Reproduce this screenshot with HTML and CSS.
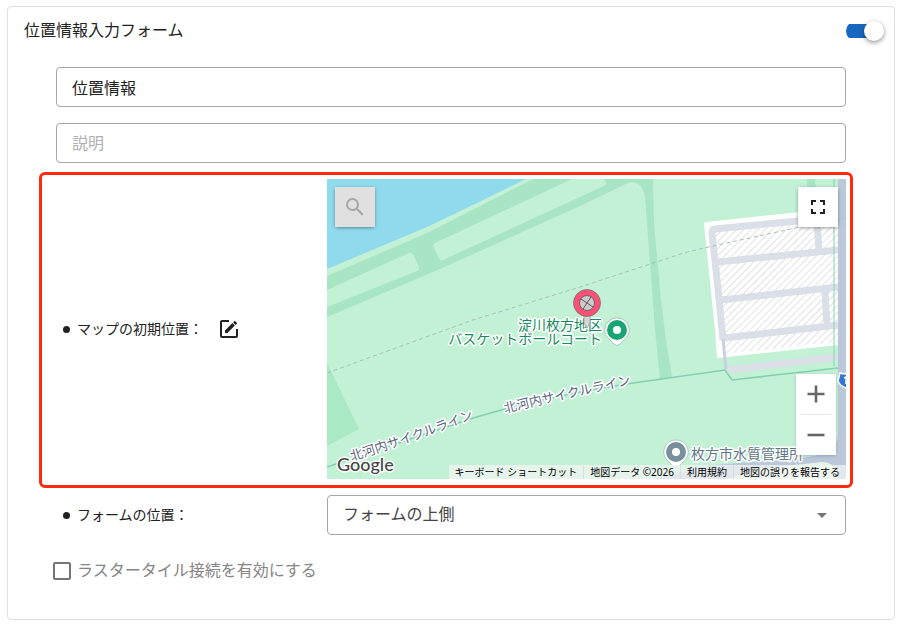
FILE: index.html
```html
<!DOCTYPE html>
<html lang="ja">
<head>
<meta charset="utf-8">
<meta name="viewport" content="width=device-width, initial-scale=1">
<title>位置情報入力フォーム</title>
<link rel="stylesheet" href="styles.css">
</head>
<body>
<form class="card">
  <header class="card-head">
    <label class="card-title" for="enabled">位置情報入力フォーム</label>
    <input class="switch" type="checkbox" role="switch" id="enabled" checked>
  </header>
  <div class="fields">
    <input class="field" type="text" aria-label="タイトル" value="位置情報">
    <input class="field" type="text" aria-label="説明" placeholder="説明">

    <div class="row highlight">
      <div class="row-label">
        <span class="bullet"></span>
        <span>マップの初期位置：</span>
        <button class="edit" type="button" aria-label="編集">
          <svg viewBox="0 0 24 24" width="24" height="24"><path d="M5,3C3.89,3 3,3.89 3,5V19A2,2 0 0,0 5,21H19A2,2 0 0,0 21,19V12H19V19H5V5H12V3H5M17.78,4C17.61,4 17.43,4.07 17.3,4.2L16.08,5.41L18.58,7.91L19.8,6.7C20.06,6.44 20.06,6 19.8,5.75L18.25,4.2C18.12,4.07 17.95,4 17.78,4M15.37,6.12L8,13.5V16H10.5L17.87,8.62L15.37,6.12Z"/></svg>
        </button>
      </div>
      <div class="map">
        <svg class="map-art" viewBox="0 0 519 300" preserveAspectRatio="xMidYMid slice">
          <defs>
            <pattern id="hatch" width="5" height="5" patternUnits="userSpaceOnUse" patternTransform="rotate(45)">
              <rect width="5" height="5" fill="#fff"/>
              <rect width="1" height="5" fill="#e2e2e4"/>
            </pattern>
            <path id="line-a" d="M25 282Q87 263 155 236"/>
            <path id="line-b" d="M178 234Q245 218 315 203"/>
          </defs>
          <rect width="519" height="300" fill="#c3f1d5"/>
          <path fill="#90daee" d="M0 0H199L150 24L100 48L0 90Z"/>
          <path fill="#a8e5c5" d="M0 97L100 54L206 0H326L327 45L334 121Q338 160 345 198L333 200L328 151L323 84L318 18Q315 2 303 3L253 27L113 90L0 138Z"/>
          <path fill="#c3f1d5" d="M0 111L82 74Q85 73 86 75L92 88Q92 91 90 92L0 128ZM108 64L245 0H277L279 4Q279 6 277 7L253 18L116 81Q113 82 112 79L106 67Q106 65 108 64Z"/>
          <path fill="#a9e9c3" d="M0 184L32 250L0 267Z"/>
          <path fill="#a8e5c5" d="M480 0H488L489 10H480Z"/>
          <path fill="#fff" d="M377 45Q377 43 379 43L511 29V166L390 179L388 151Z"/>
          <path fill="url(#hatch)" d="M388 52L511 40V163L398 175Z"/>
          <g fill="none" stroke="#dadfe8" stroke-width="7">
            <path d="M511 38L388 50Q385 50 385 54L390 100L396 161"/>
            <path d="M390 83L511 71M394 121L511 108M397 159L511 146M490 42L492 72M498 111L500 148M400 191L511 178"/>
          </g>
          <path d="M396 160L399 190" fill="none" stroke="#c9d0e1" stroke-width="3"/>
          <path d="M507 0V187" stroke="#86d4b5" stroke-width="1"/>
          <path fill="#bac8d9" d="M511 0H519V300H330L376 287L470 279Q511 277 511 256Z"/>
          <path fill="#e0f6e8" d="M400 300L430 290L495 283Q505 283 510 292V300Z"/>
          <path fill="none" stroke="#82cfb3" stroke-width="1.5" d="M0 288Q80 261 146 239L178 230Q240 214 306 204L398 191L405 201L511 189"/>
          <path fill="none" stroke="#a9bfb8" stroke-width="1" stroke-dasharray="4 3" d="M0 194L146 141L253 108L360 73L386 67L473 48L519 39"/>
          <g class="map-text path-text">
            <text><textPath href="#line-a">北河内サイクルライン</textPath></text>
            <text><textPath href="#line-b">北河内サイクルライン</textPath></text>
          </g>
          <g class="map-text place-text">
            <text x="275" y="151" text-anchor="end">淀川枚方地区</text>
            <text x="275" y="165" text-anchor="end">バスケットボールコート</text>
          </g>
          <text class="map-text works-text" x="364" y="280">枚方市水質管理所</text>
          <path fill="#fff" stroke="#8fa59b" stroke-width=".6" d="M290 139A12 12 0 0 1 299 159L293 165Q290 168 287 165L281 159A12 12 0 0 1 290 139Z"/>
          <circle cx="290" cy="151" r="10" fill="#17a673"/>
          <circle cx="290" cy="151" r="4" fill="#fff"/>
          <path fill="#fff" stroke="#9aabb0" stroke-width=".6" d="M349 261A12 12 0 0 1 358 281L352 287Q349 290 346 287L340 281A12 12 0 0 1 349 261Z"/>
          <circle cx="349" cy="273" r="10" fill="#78909c"/>
          <circle cx="349" cy="273" r="4" fill="#fff"/>
          <path d="M257 135H263V144L260 149L257 144Z" fill="#d6d6d6" stroke="#999" stroke-width=".7"/>
          <circle cx="260" cy="124" r="13.5" fill="#fa5276" stroke="#7d6d70" stroke-width=".8"/>
          <circle cx="260" cy="124" r="7.5" fill="#cfcaca" stroke="#6d6266" stroke-width="1"/>
          <path d="M254 120L266 128M264 118L256 130" stroke="#5e5558" stroke-width="1"/>
          <path d="M513 194Q519 196 525 194L527 202Q525 207 519 209Q513 207 511 202Z" fill="#3476d2" stroke="#fff" stroke-width="1.5"/>
          <path d="M517 199L519 198V205" fill="none" stroke="#fff" stroke-width="1.5"/>
          <text class="google" x="10" y="292">Google</text>
        </svg>
        <button class="map-btn search" type="button" aria-label="検索" disabled>
          <svg viewBox="0 0 24 24" width="24" height="24"><path d="M9.5,3A6.5,6.5 0 0,1 16,9.5C16,11.11 15.41,12.59 14.44,13.73L14.71,14H15.5L20.5,19L19,20.5L14,15.5V14.71L13.73,14.44C12.59,15.41 11.11,16 9.5,16A6.5,6.5 0 0,1 3,9.5A6.5,6.5 0 0,1 9.5,3M9.5,5C7,5 5,7 5,9.5C5,12 7,14 9.5,14C12,14 14,12 14,9.5C14,7 12,5 9.5,5Z"/></svg>
        </button>
        <button class="map-btn full" type="button" aria-label="全画面">
          <svg viewBox="0 0 18 18" width="18" height="18"><path d="M2 2H7V4H4V7H2ZM11 2H16V7H14V4H11ZM2 11H4V14H7V16H2ZM14 11H16V16H11V14H14Z"/></svg>
        </button>
        <div class="zoom">
          <button type="button" aria-label="ズームイン"><svg viewBox="0 0 18 18" width="18" height="18"><path d="M7.7 .5H10.3V7.7H17.5V10.3H10.3V17.5H7.7V10.3H.5V7.7H7.7Z"/></svg></button>
          <button type="button" aria-label="ズームアウト"><svg viewBox="0 0 18 18" width="18" height="18"><path d="M.5 7.7H17.5V10.3H.5Z"/></svg></button>
        </div>
        <div class="credits">
          <button type="button">キーボード ショートカット</button>
          <span>地図データ ©2026</span>
          <a href="#">利用規約</a>
          <a href="#">地図の誤りを報告する</a>
        </div>
      </div>
    </div>

    <div class="row">
      <label class="row-label" for="position">
        <span class="bullet"></span>
        <span>フォームの位置：</span>
      </label>
      <div class="select">
        <select class="field" id="position"><option>フォームの上側</option></select>
      </div>
    </div>

    <label class="check"><input type="checkbox">ラスタータイル接続を有効にする</label>
  </div>
</form>
</body>
</html>
```
FILE: styles.css
```css
* {
  box-sizing: border-box;
}

body {
  margin: 0;
  padding: 6px 4px 4px 7px;
  background: #fff;
  color: #212121;
  font: 16px/24px Roboto, "Noto Sans CJK JP", sans-serif;
}

button,
input,
select {
  margin: 0;
  font: inherit;
  color: inherit;
}

button {
  padding: 0;
  border: 0;
  background: none;
}

svg {
  display: block;
  fill: currentColor;
}

.card {
  border: 1px solid #e0e0e0;
  border-radius: 4px;
  padding: 0 16px 36px;
}

.card-head {
  display: flex;
  align-items: center;
  justify-content: space-between;
  height: 48px;
  margin-right: -6px;
}

.switch {
  appearance: none;
  position: relative;
  width: 38px;
  height: 20px;
  background: linear-gradient(#1867c0, #1867c0) 0 3px / 28px 14px no-repeat;
  border-radius: 10px;
}

.switch::after {
  content: "";
  position: absolute;
  top: 0;
  right: 0;
  width: 20px;
  height: 20px;
  border-radius: 50%;
  background: #fff;
  box-shadow: 0 2px 4px rgba(0, 0, 0, .3), 0 1px 6px rgba(0, 0, 0, .15);
}

.fields {
  display: flex;
  flex-direction: column;
  gap: 16px;
  padding: 12px 32px 0;
}

.field {
  width: 100%;
  height: 40px;
  padding: 0 15px;
  border: 1px solid #a6a6a6;
  border-radius: 4px;
  background: #fff;
  outline: 0;
}

.field::placeholder {
  color: #b0b0b0;
  opacity: 1;
}

.row {
  position: relative;
  display: grid;
  grid-template-columns: 271px 1fr;
  align-items: center;
}

.highlight::after {
  content: "";
  position: absolute;
  inset: -7px -7px -9px -17px;
  border: 3px solid #ff2a0c;
  border-radius: 6px;
  pointer-events: none;
}

.row-label {
  display: flex;
  align-items: center;
  padding-left: 7px;
  font-size: 14px;
}

.bullet {
  width: 7px;
  height: 7px;
  margin-right: 7px;
  border-radius: 50%;
  background: #212121;
}

.edit {
  margin-left: 14px;
}

.map {
  position: relative;
  height: 300px;
  overflow: hidden;
}

.map-art {
  width: 100%;
  height: 100%;
}

.map-text {
  font-size: 14px;
  stroke: #fff;
  stroke-width: 3px;
  stroke-linejoin: round;
  paint-order: stroke;
}

.path-text {
  font-size: 13px;
  fill: #5b6680;
}

.place-text {
  fill: #188a60;
}

.works-text {
  fill: #5f7886;
}

.google {
  font: 500 18px Lato, sans-serif;
  fill: #444;
  stroke: #fff;
  stroke-width: 3px;
  stroke-linejoin: round;
  paint-order: stroke;
}

.map-btn {
  position: absolute;
  top: 8px;
  display: grid;
  place-items: center;
  width: 40px;
  height: 40px;
  background: #fff;
  box-shadow: 0 1px 4px -1px rgba(0, 0, 0, .6);
}

.search {
  left: 8px;
  background: #e0e0e0;
  color: #a6a6a6;
}

.full {
  right: 8px;
}

.zoom {
  position: absolute;
  right: 10px;
  bottom: 24px;
  display: flex;
  flex-direction: column;
  width: 40px;
  padding: 0 5px;
  background: #fff;
  color: #666;
  box-shadow: 0 1px 4px -1px rgba(0, 0, 0, .3);
}

.zoom button {
  display: grid;
  place-items: center;
  height: 40px;
}

.zoom button + button {
  height: 41px;
  border-top: 1px solid #e6e6e6;
}

.credits {
  position: absolute;
  right: 0;
  bottom: 0;
  display: flex;
  font: 10px/14px "Noto Sans", "Noto Sans CJK JP", sans-serif;
  color: #000;
  white-space: nowrap;
}

.credits > * {
  padding: 0 6px;
  background: rgba(245, 245, 245, .7);
  color: inherit;
  text-decoration: none;
}

.credits > * + * {
  border-left: 1px solid rgba(190, 210, 210, .5);
}

.select {
  position: relative;
}

.select select {
  appearance: none;
  display: block;
  color: #444;
}

.select::after {
  content: "";
  position: absolute;
  top: 18px;
  right: 19px;
  border: 5px solid transparent;
  border-top-color: #757575;
  border-bottom: 0;
  pointer-events: none;
}

.check {
  display: flex;
  align-items: center;
  gap: 6px;
  margin: 8px 0 0 -3px;
  color: #858585;
}

.check input {
  appearance: none;
  width: 18px;
  height: 18px;
  border: 2px solid #757575;
  border-radius: 2px;
}
```
